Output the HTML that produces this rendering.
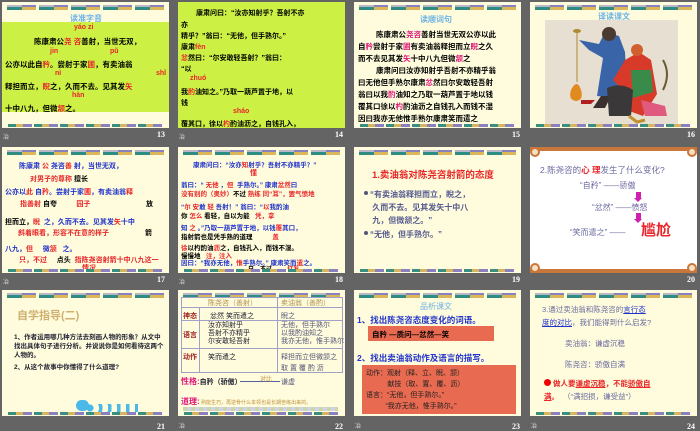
<!DOCTYPE html>
<html><head><meta charset="utf-8"><style>
*{margin:0;padding:0;box-sizing:border-box}
body{width:700px;height:431px;background:#646464;position:relative;overflow:hidden;font-family:"Liberation Sans","Noto Sans CJK SC",sans-serif;}
.s{position:absolute;width:167px;height:126px;background:#fefcdc;overflow:hidden}
.s div,.s span.a{position:absolute;white-space:nowrap}
.bar{position:absolute;left:5px;top:3px;width:157px;height:5px;
background:linear-gradient(180deg,#d8d8b0 0 1px,transparent 1px),repeating-linear-gradient(90deg,#2f8c80 0 15px,#d9b75a 15px 29px,#fefcdc 29px 32px);}
.bar2{position:absolute;left:5px;top:3px;width:157px;height:2px;background:repeating-linear-gradient(90deg,#b8b8c8 0 15px,#8a80c0 15px 29px,#fefcdc 29px 32px)}
.bot{position:absolute;left:6px;bottom:1px;width:155px;height:3px;background:repeating-linear-gradient(90deg,#3a9080 0 8px,#d7b560 8px 15px,#8a80c0 15px 24px,#fefcdc 24px 26px)}
.n{position:absolute;color:#fff;font-size:8px;font-weight:bold;font-family:"Liberation Serif",serif}
.m{position:absolute;color:#ddd;font-size:6px}
.t{font-size:8px;color:#000;font-weight:bold}
.r{color:#e8262a}.p{color:#e0137a}.b{color:#2233cc}.lb{color:#6fb3e8}
.sm{font-size:7px}
</style></head><body>

<!-- 13 -->
<div class="s" style="left:2px;top:2px">
<div class="bar"></div><div class="bar2"></div>
<div class="lb" style="left:68px;top:11px;font-size:8px;font-weight:bold">读准字音</div>
<div style="left:0;top:20px;width:167px;height:90px;background:#ccf044"></div>
<div class="r t sm" style="left:72px;top:22px">yáo zi</div>
<div class="t" style="left:32px;top:34px;font-size:7.5px">陈康肃公<span class="r">尧 咨</span>善射，当世无双，</div>
<div class="r t sm" style="left:48px;top:46px">jin</div><div class="r t sm" style="left:108px;top:46px">pǔ</div>
<div class="t" style="left:3px;top:57px;font-size:7.5px">公亦以此自<span class="r">矜</span>。尝射于家<span class="r">圃</span>，有卖油翁</div>
<div class="r t sm" style="left:53px;top:68px">nì</div><div class="r t sm" style="left:154px;top:68px">shǐ</div>
<div class="t" style="left:3px;top:79px;font-size:7.5px">释担而立，<span class="r">睨</span>之，久而不去。见其发<span class="r">矢</span></div>
<div class="r t sm" style="left:70px;top:90px">hàn</div>
<div class="t" style="left:3px;top:101px;font-size:7.5px">十中八九，但微<span class="r">颔</span>之。</div>
<div class="bot"></div>
</div>
<div class="m" style="left:3px;top:132px">冶</div><div class="n" style="left:157px;top:130px">13</div>

<!-- 14 -->
<div class="s" style="left:178px;top:2px;background:#ccf044">
<div class="t" style="left:18px;top:6px;font-size:7px">康肃问曰：“汝亦知射乎？吾射不亦</div>
<div class="t" style="left:3px;top:18px;font-size:7px">亦</div>
<div class="t" style="left:3px;top:29px;font-size:7px">精乎？”翁曰：“无他，但手熟尔。”</div>
<div class="t" style="left:3px;top:40px;font-size:7px">康肃<span class="r">fèn</span></div>
<div class="t" style="left:3px;top:51px;font-size:7px"><span class="r">忿</span>然曰：“尔安敢轻吾射？”翁曰：</div>
<div class="t" style="left:3px;top:62px;font-size:7px">“以</div>
<div class="r t sm" style="left:12px;top:73px">zhuó</div>
<div class="t" style="left:3px;top:85px;font-size:7px">我<span class="r">酌</span>油知之。”乃取一葫芦置于地，以</div>
<div class="t" style="left:3px;top:96px;font-size:7px">钱</div>
<div class="r t sm" style="left:55px;top:106px">sháo</div>
<div class="t" style="left:3px;top:117px;font-size:7px">覆其口，徐以<span class="r">杓</span>酌油沥之，自钱孔入，</div>
</div>
<div class="m" style="left:179px;top:132px">冶</div><div class="n" style="left:335px;top:130px">14</div>

<!-- 15 -->
<div class="s" style="left:354px;top:2px">
<div class="bar"></div><div class="bar2"></div>
<div class="lb" style="left:66px;top:12px;font-size:8px;font-weight:bold">读顺词句</div>
<div class="t" style="left:22px;top:27px;font-size:7.5px">陈康肃公<span class="p">尧咨</span>善射当世无双公亦以此</div>
<div class="t" style="left:4px;top:39px;font-size:7.5px">自<span class="p">矜</span>尝射于家<span class="p">圃</span>有卖油翁释担而立<span class="p">睨</span>之久</div>
<div class="t" style="left:4px;top:51px;font-size:7.5px">而不去见其发<span class="p">矢</span>十中八九但微<span class="p">颔</span>之</div>
<div class="t" style="left:22px;top:63px;font-size:7.5px">康肃问曰汝亦知射乎吾射不亦精乎翁</div>
<div class="t" style="left:4px;top:75px;font-size:7.5px">曰无他但手熟尔康肃<span class="p">忿</span>然曰尔安敢轻吾射</div>
<div class="t" style="left:4px;top:87px;font-size:7.5px">翁曰以我<span class="p">酌</span>油知之乃取一葫芦置于地以钱</div>
<div class="t" style="left:4px;top:99px;font-size:7.5px">覆其口徐以<span class="p">杓</span>酌油沥之自钱孔入而钱不湿</div>
<div class="t" style="left:4px;top:111px;font-size:7.5px">因曰我亦无他惟手熟尔康肃笑而遣之</div>
<div class="bot"></div>
</div>
<div class="n" style="left:512px;top:130px">15</div>

<!-- 16 -->
<div class="s" style="left:530px;top:2px">
<div class="bar"></div><div class="bar2"></div>
<div class="lb" style="left:68px;top:9px;font-size:8px;font-weight:bold">译读课文</div>
<div style="left:15px;top:18px;width:133px;height:104px;background:#e6dfd2">
<svg width="133" height="104" viewBox="0 0 133 104" style="position:absolute;left:0;top:0">
<line x1="32" y1="12" x2="32" y2="62" stroke="#b08a30" stroke-width="1"/>
<ellipse cx="32" cy="11" rx="4" ry="2" fill="#b08a30"/>
<path d="M26 70 q6 -12 10 0 q3 10 -5 11 q-8 -1 -5 -11z" fill="#e08a20"/>
<path d="M36 80 l14 0 l-4 4 l-10 0z" fill="#b02020"/>
<path d="M34 20 l20 4 l6 -12 l14 4 l6 16 l2 38 l-8 8 l-22 -2 l6 -38 l-14 -8z" fill="#3a64a8"/>
<circle cx="64" cy="14" r="7" fill="#4a3a30"/>
<path d="M56 76 l-8 12 l12 0 l6 -12z" fill="#3a3030"/>
<path d="M80 40 l14 -8 l12 8 l6 34 l-14 22 l-22 -8 l4 -16 l-12 -12z" fill="#d83a2a"/>
<path d="M86 50 l20 0 l2 22 l-20 6z" fill="#3a8a4a"/>
<circle cx="92" cy="30" r="6" fill="#d06030"/>
<path d="M62 68 q14 -6 26 2 l-2 26 l-22 0z" fill="#3a3838"/>
<path d="M96 80 l24 6 l2 10 l-22 0z" fill="#e05a80"/>
<path d="M118 40 q8 14 0 30" stroke="#6a5a30" stroke-width="2" fill="none"/>
<path d="M84 96 l8 6 l8 -2" stroke="#c09030" stroke-width="3" fill="none"/>
</svg></div>
<div class="bot"></div>
</div>
<div class="n" style="left:687px;top:130px">16</div>

<!-- 17 -->
<div class="s" style="left:2px;top:147px">
<div class="bar"></div><div class="bar2"></div>
<div class="b t sm" style="left:17px;top:14px">陈康肃 <span class="r">公</span> 尧咨<span class="r">善</span> 射，当世无双，</div>
<div class="r t sm" style="left:28px;top:27px">对男子的尊称 <span style="color:#000">擅长</span></div>
<div class="b t sm" style="left:3px;top:40px">公亦以<span class="r">此</span> 自<span class="r">矜</span>。尝射于家<span class="r">圃</span>，有卖油翁<span class="r">释</span></div>
<div class="r t sm" style="left:18px;top:52px">指善射 <span style="color:#000">自夸</span>&nbsp;&nbsp;&nbsp;&nbsp;&nbsp;&nbsp;&nbsp;&nbsp;&nbsp; 园子</div>
<div class="t sm" style="left:144px;top:52px">放</div>
<div class="b t sm" style="left:3px;top:70px"><span style="color:#000">担而立，</span><span class="r">睨</span>&nbsp; 之，久而不去。见其发<span class="r">矢</span>十中</div>
<div class="r t sm" style="left:16px;top:81px">斜着眼看，形容不在意的样子</div>
<div class="t sm" style="left:143px;top:81px">箭</div>
<div class="b t sm" style="left:3px;top:97px">八九，<span class="r">但</span>&nbsp;&nbsp;&nbsp;&nbsp; 微<span class="r">颔</span>&nbsp;&nbsp; 之。</div>
<div class="r t sm" style="left:17px;top:108px">只，不过 <span style="color:#000">&nbsp;&nbsp;&nbsp;&nbsp;点头</span>&nbsp; 指陈尧咨射箭十中八九这一</div>
<div class="r t sm" style="left:80px;top:116px">情况</div>
<div class="bot"></div>
</div>
<div class="m" style="left:3px;top:277px">冶</div><div class="n" style="left:157px;top:275px">17</div>

<!-- 18 -->
<div class="s" style="left:178px;top:147px">
<div class="bar"></div><div class="bar2"></div>
<div class="b t" style="left:15px;top:12px;font-size:6.5px">康肃问曰：“汝亦<span class="r">知</span>射乎？吾射不亦精乎？”</div>
<div class="r t sm" style="left:72px;top:21px">懂</div>
<div class="b t" style="left:3px;top:32px;font-size:6.5px">翁曰：“ <span class="r">无他</span> ，<span class="r">但</span>&nbsp; 手熟尔。” 康肃<span class="r">忿然</span>曰</div>
<div class="r t" style="left:3px;top:41px;font-size:6.5px">没有别的（奥妙）<span style="color:#000">不过</span> 熟练 同“耳”，罢气愤地</div>
<div class="b t" style="left:3px;top:54px;font-size:6.5px">“<span class="r">尔 安</span>敢 <span class="r">轻</span> 吾射！” 翁曰：“<span class="r">以</span>我酌油</div>
<div class="t" style="left:3px;top:63px;font-size:6.5px">你 <span class="r">怎么</span> 看轻，自以为能 &nbsp;&nbsp;<span class="r">凭，拿</span></div>
<div class="b t" style="left:3px;top:75px;font-size:6.5px">知 <span class="r">之</span> 。”乃取一葫芦置于地，以钱<span class="r">覆</span>其口，</div>
<div class="t" style="left:3px;top:84px;font-size:6.5px">指射箭也是凭手熟的道理 &nbsp;&nbsp;&nbsp;&nbsp;&nbsp;&nbsp;&nbsp;&nbsp;&nbsp;&nbsp;<span class="r">盖</span></div>
<div class="t" style="left:3px;top:95px;font-size:6.5px"><span class="r">徐</span>以杓酌油<span class="r">沥</span>之，自钱孔入，而钱不湿。</div>
<div class="t" style="left:3px;top:103px;font-size:6.5px">慢慢地 &nbsp;&nbsp;<span class="r">注，注入</span></div>
<div class="b t" style="left:3px;top:110px;font-size:6.5px">因曰：“我亦无他，<span class="r">惟</span>手熟尔。” 康肃笑而<span class="r">遣</span>之。</div>
<div class="t" style="left:70px;top:117px;font-size:6px">只，不过 <span class="r">&nbsp;&nbsp;&nbsp;&nbsp;&nbsp;&nbsp;&nbsp;&nbsp;打发</span></div>
<div class="bot"></div>
</div>
<div class="m" style="left:179px;top:277px">冶</div><div class="n" style="left:335px;top:275px">18</div>

<!-- 19 -->
<div class="s" style="left:354px;top:147px">
<div class="bar"></div><div class="bar2"></div>
<div class="r t" style="left:18px;top:20px;font-size:9.5px">1.卖油翁对陈尧咨射箭的态度</div>
<div style="left:16px;top:41px;font-size:8px;color:#555a90;font-weight:bold;line-height:13px;white-space:normal;width:140px">“有卖油翁释担而立，睨之，<br>&nbsp;久而不去。见其发矢十中八<br>&nbsp;九，但微颔之。”</div>
<div style="left:16px;top:82px;font-size:8px;color:#555a90;font-weight:bold">“无他，但手熟尔。”</div>
<div style="left:10px;top:44px;width:4px;height:4px;border-radius:2px;background:#557"></div>
<div style="left:10px;top:84px;width:4px;height:4px;border-radius:2px;background:#557"></div>
<div class="bot"></div>
</div>
<div class="n" style="left:512px;top:275px">19</div>

<!-- 20 -->
<div class="s" style="left:530px;top:147px;background:#fff">
<div style="left:0;top:0;width:167px;height:4px;background:#c9763a"></div>
<div style="left:0;top:122px;width:167px;height:4px;background:#c9763a"></div>
<div style="left:0;top:0;width:10px;height:10px;border-radius:5px;border:2px solid #c9763a;background:#f5e0c0"></div>
<div style="left:157px;top:0;width:10px;height:10px;border-radius:5px;border:2px solid #c9763a;background:#f5e0c0"></div>
<div style="left:0;top:116px;width:10px;height:10px;border-radius:5px;border:2px solid #c9763a;background:#f5e0c0"></div>
<div style="left:157px;top:116px;width:10px;height:10px;border-radius:5px;border:2px solid #c9763a;background:#f5e0c0"></div>
<div style="left:10px;top:17px;font-size:8.5px;color:#6a6aa0">2.陈尧咨的<b class="r">心 理</b>发生了什么变化?</div>
<div style="left:50px;top:33px;font-size:8px;color:#6a6aa0">“自矜” ——骄傲</div>
<div style="left:62px;top:55px;font-size:8px;color:#6a6aa0">“忿然” ——愤怒</div>
<div style="left:40px;top:80px;font-size:8px;color:#6a6aa0">“笑而遣之” ——</div>
<div class="r" style="left:111px;top:72px;font-size:15px;font-weight:bold">尴尬</div>
<div style="left:106px;top:45px;width:5px;height:6px;background:#d020b0"></div>
<div style="left:104px;top:51px;width:0;height:0;border-left:4.5px solid transparent;border-right:4.5px solid transparent;border-top:4px solid #d020b0"></div>
<div style="left:106px;top:66px;width:5px;height:6px;background:#d020b0"></div>
<div style="left:104px;top:72px;width:0;height:0;border-left:4.5px solid transparent;border-right:4.5px solid transparent;border-top:4px solid #d020b0"></div>
</div>
<div class="n" style="left:687px;top:275px">20</div>

<!-- 21 -->
<div class="s" style="left:2px;top:290px">
<div class="bar"></div><div class="bar2"></div>
<div style="left:15px;top:17px;font-size:11px;font-weight:bold;color:#d0b070">自学指导(二)</div>
<div class="t" style="left:12px;top:43px;font-size:6.5px;color:#223;line-height:9px;white-space:normal;width:150px">1、作者运用哪几种方法去刻画人物的形象？从文中找出具体句子进行分析。并说说你是如何看待这两个人物的。</div>
<div class="t" style="left:12px;top:71px;font-size:6.5px;color:#223">2、从这个故事中你懂得了什么道理?</div>
<div style="left:84px;top:114px;width:52px;height:8px;background:repeating-radial-gradient(circle at 4px 4px,#4ab8e8 0 3.5px,transparent 3.5px 9px)"></div>
<div style="left:74px;top:110px;width:13px;height:11px;border-radius:6px;background:#4ab8e8"></div>
<div class="bot"></div>
</div>
<div class="n" style="left:157px;top:422px">21</div>

<!-- 22 -->
<div class="s" style="left:178px;top:290px">
<div class="bar"></div><div class="bar2"></div>
<div style="left:3px;top:7px;width:162px;height:76px;border:1px solid #a0a0c8"></div>
<div style="left:3px;top:17px;width:162px;height:1px;background:#a0a0c8"></div>
<div style="left:3px;top:30px;width:162px;height:1px;background:#a0a0c8"></div>
<div style="left:3px;top:58px;width:162px;height:1px;background:#a0a0c8"></div>
<div style="left:21px;top:17px;width:1px;height:66px;background:#a0a0c8"></div>
<div style="left:99px;top:7px;width:1px;height:76px;background:#a0a0c8"></div>
<div style="left:30px;top:8px;font-size:7px;color:#b09050">陈尧咨（善射）</div>
<div style="left:103px;top:8px;font-size:7px;color:#b09050">卖油翁（善酌）</div>
<div style="left:5px;top:21px;font-size:7px;color:#a02020;font-weight:bold">神态</div>
<div style="left:5px;top:40px;font-size:7px;color:#a02020;font-weight:bold">语言</div>
<div style="left:5px;top:62px;font-size:7px;color:#a02020;font-weight:bold">动作</div>
<div style="left:32px;top:21px;font-size:7px;color:#223">忿然 笑而遣之</div>
<div style="left:103px;top:21px;font-size:7px;color:#557">睨之</div>
<div style="left:30px;top:32px;font-size:7px;color:#223;line-height:8px">汝亦知射乎<br>吾射不亦精乎<br>尔安敢轻吾射</div>
<div style="left:103px;top:32px;font-size:7px;color:#557;line-height:8px">无他，但手熟尔<br>以我酌油知之<br>我亦无他，惟手熟尔</div>
<div style="left:30px;top:62px;font-size:7px;color:#223">笑而遣之</div>
<div style="left:103px;top:62px;font-size:7px;color:#557;line-height:11px">释担而立但微颔之<br>取 置 覆 酌 沥</div>
<div style="left:3px;top:86px;font-size:8px;color:#e0137a;font-weight:bold">性格:<span style="color:#223;font-size:7px">自矜（骄傲）</span></div>
<div style="left:62px;top:91px;width:40px;height:1px;background:#5560a0"></div>
<div style="left:82px;top:84px;font-size:6px;color:#c09040">对比</div>
<div style="left:103px;top:87px;font-size:7px;color:#557">谦虚</div>
<div style="left:3px;top:106px;font-size:8px;color:#e0137a;font-weight:bold">道理:<span style="color:#c09040;font-size:5px;font-weight:normal"> 熟能生巧，再逆骨什么本领也是长期苦练出来的。</span></div>
<div style="left:5px;top:117px;width:155px;height:4px;background:repeating-linear-gradient(90deg,#c8d8a0 0 4px,#d0d0f0 4px 8px)"></div>
<div class="bot"></div>
</div>
<div class="m" style="left:179px;top:421px">冶</div><div class="n" style="left:335px;top:422px">22</div>

<!-- 23 -->
<div class="s" style="left:354px;top:290px">
<div class="bar"></div><div class="bar2"></div>
<div class="lb" style="left:66px;top:11px;font-size:8px">品析课文</div>
<div class="b t" style="left:3px;top:24px;font-size:8.5px">1、找出陈尧咨态度变化的词语。</div>
<div style="left:14px;top:36px;width:126px;height:15px;background:#e86a50"></div>
<div class="t" style="left:18px;top:39px;font-size:7.5px">自矜 —质问—忿然—笑</div>
<div class="b t" style="left:3px;top:62px;font-size:8.5px">2、找出卖油翁动作及语言的描写。</div>
<div style="left:8px;top:75px;width:154px;height:49px;background:#e86a50"></div>
<div style="left:12px;top:78px;font-size:7px;color:#222;line-height:11px">动作：观射（释、立、睨、颔）<br>&nbsp;&nbsp;&nbsp;&nbsp;&nbsp;&nbsp;&nbsp;&nbsp;&nbsp;&nbsp;&nbsp;献技（取、置、覆、沥）<br>语言：“无他，但手熟尔。”<br>&nbsp;&nbsp;&nbsp;&nbsp;&nbsp;&nbsp;&nbsp;&nbsp;&nbsp;&nbsp;“我亦无他，惟手熟尔。”</div>
</div>
<div class="m" style="left:355px;top:421px">冶</div><div class="n" style="left:512px;top:422px">23</div>

<!-- 24 -->
<div class="s" style="left:530px;top:290px">
<div class="bar"></div><div class="bar2"></div>
<div style="left:12px;top:14px;font-size:7.5px;color:#6a6aa0">3.通过卖油翁和陈尧咨的<u class="b">言行态</u></div>
<div style="left:12px;top:27px;font-size:7.5px;color:#6a6aa0"><u class="b">度的对比</u>，我们能得到什么启发?</div>
<div style="left:35px;top:48px;font-size:7.5px;color:#6a6aa0">卖油翁：谦虚沉稳</div>
<div style="left:35px;top:69px;font-size:7.5px;color:#6a6aa0">陈尧咨：骄傲自满</div>
<div style="left:14px;top:89px;width:7px;height:7px;border-radius:4px;background:#e00"></div>
<div class="r" style="left:23px;top:88px;font-size:7.5px;font-weight:bold">做人要<u>谦虚沉稳</u>，不能<u>骄傲自</u></div>
<div class="r" style="left:14px;top:101px;font-size:7.5px;font-weight:bold"><u>满</u>。<span style="color:#6a6aa0;font-weight:normal">&nbsp;&nbsp;（“满招损，谦受益”）</span></div>
<div class="bot"></div>
</div>
<div class="m" style="left:531px;top:421px">冶</div><div class="n" style="left:687px;top:422px">24</div>

</body></html>
